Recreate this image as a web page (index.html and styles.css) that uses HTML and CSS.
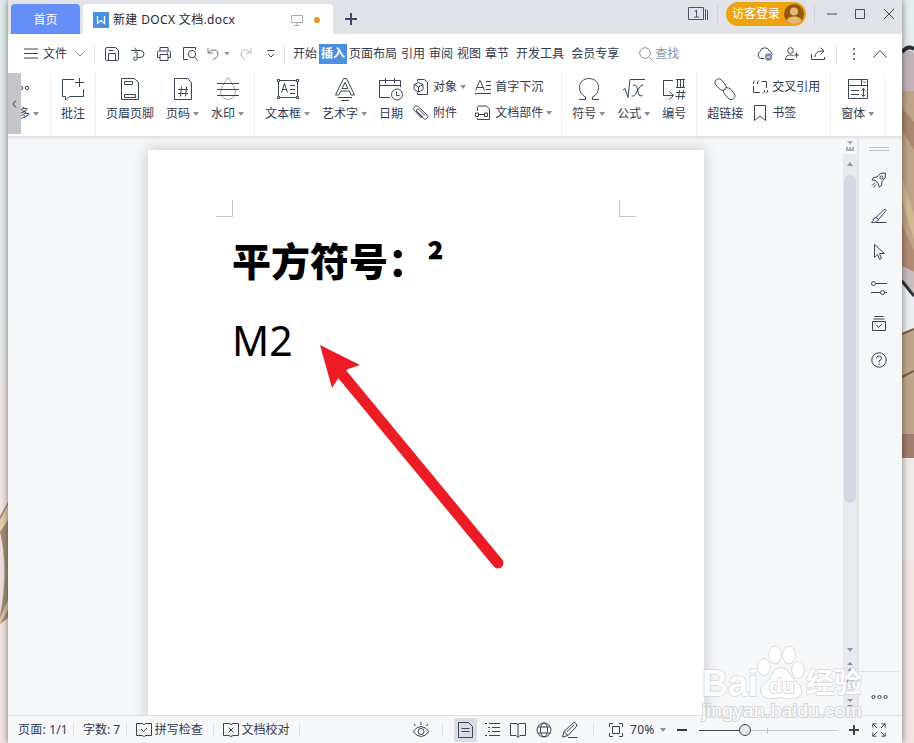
FILE: index.html
```
<!DOCTYPE html>
<html lang="zh-CN">

<head>
    <meta charset="UTF-8">
    <title>新建 DOCX 文档.docx</title>
    <link rel="stylesheet" href="styles.css">
</head>

<body>
    <!-- desktop wallpaper behind the window -->
    <svg class="wallpaper" width="914" height="743" viewBox="0 0 914 743">
        <defs>
            <linearGradient id="wall" x1="0" y1="0" x2="0" y2="1">
                <stop offset="0" stop-color="#e3eeee" />
                <stop offset="0.48" stop-color="#e6e8e8" />
                <stop offset="0.55" stop-color="#f0e5e4" />
                <stop offset="1" stop-color="#f3e4e1" />
            </linearGradient>
        </defs>
        <rect width="914" height="743" fill="url(#wall)" />
        <path d="M0 516L8 502V618L0 624z" fill="#a48d79" />
        <path d="M0 520L8 505V520L0 532z" fill="#e5cfa8" />
        <path d="M0 532Q9 570 0 615z" fill="#eee0dc" />
        <path d="M0 618L8 600V610L0 624z" fill="#dcc6a0" />
        <path d="M902 52Q910 48 914 53V91H902z" fill="#c2b3b8" />
        <path d="M902 52Q908 45 914 49" fill="none" stroke="#2b2d3d" stroke-width="4" />
        <path d="M902 91H914V272L902 266z" fill="#bea489" />
        <path d="M902 108L914 122V150L902 130z" fill="#a88872" />
        <path d="M902 178L914 215V240L902 200z" fill="#d1b993" />
        <path d="M902 225L914 250V272L902 266z" fill="#b18c76" />
        <path d="M902 266L914 272V292L902 282z" fill="#cbbcbe" />
        <path d="M902 282L914 293V329L902 334z" fill="#eceff1" />
        <path d="M902 281L914 296" stroke="#30313a" stroke-width="3" />
        <path d="M902 334L914 329V458H902z" fill="#bda68c" />
        <path d="M902 334L914 329M902 377L914 371" stroke="#7c5c4d" stroke-width="2" />
        <path d="M902 434H914V458H902z" fill="#a07e6d" />
        <path d="M902 458H914V560H902z" fill="#f1edeb" />
    </svg>

    <div class="window">
        <div class="titlebar">
            <div class="home-tab">首页</div>
            <div class="doc-tab">
                <svg width="16" height="16" viewBox="0 0 16 16">
                    <rect width="16" height="16" rx="1" fill="#4a90e2" />
                    <path d="M4.500 4v7.500L8 8.500l3.500 3V4" fill="none" stroke="#fff" stroke-width="1.200" />
                </svg>
                <span class="doc-name">新建 DOCX 文档.docx</span>
                <svg class="screen-icon" width="12" height="12" viewBox="0 0 12 12">
                    <path d="M.5 1.500h11v7H.5zM6 8.500V11M3 11.500h6" stroke="#a9afba" />
                </svg>
                <span class="unsaved"></span>
            </div>
            <svg class="new-tab" width="12" height="12" viewBox="0 0 12 12">
                <path d="M6 0v12M0 6h12" stroke="#3f4a66" stroke-width="2" />
            </svg>
            <div class="window-tools">
                <svg width="21" height="16" viewBox="0 0 21 16">
                    <path d="M.5 1.500h15v12H.5zM17.500 3v11M19.500 4v10M6.500 5.500l2-1.500v7M6 11h5" stroke="#4a5573" />
                </svg>
                <i class="sep"></i>
                <div class="login">访客登录
                    <svg width="20" height="20" viewBox="0 0 20 20">
                        <circle cx="10" cy="10" r="10" fill="#94590c" />
                        <circle cx="10" cy="7.500" r="4" fill="#e6b878" />
                        <path d="M2.500 16.500Q4 12.500 10 12.500T17.500 16.500A10 10 0 0 1 2.500 16.500z" fill="#e6b878" />
                    </svg>
                </div>
                <i class="sep"></i>
                <svg class="win-buttons" width="68" height="12" viewBox="0 0 68 12">
                    <path d="M0 6h10M28.500 1.500h9v9h-9zM57 1l10 10M67 1L57 11" stroke="#3f4a66" />
                </svg>
            </div>
        </div>

        <div class="menubar">
            <svg width="14" height="11" viewBox="0 0 14 11">
                <path d="M0 1h14M0 5.500h14M0 10h14" />
            </svg>
            <span class="file">文件</span>
            <svg class="chev" width="10" height="6" viewBox="0 0 10 6">
                <path d="M.5.5L5 5 9.500.5" stroke="#8d939e" />
            </svg>
            <i class="sep"></i>
            <div class="quick">
                <svg width="14" height="14" viewBox="0 0 14 14">
                    <path d="M2 .5h8.500l3 3V12q0 1.500-1.500 1.500H2Q.5 13.500.5 12V2Q.5.5 2 .5zM3.500 13.500v-7h7v7M3.500 3.500h5" />
                </svg>
                <svg width="14" height="14" viewBox="0 0 14 14">
                    <path d="M0 3.500h9a4 3.500 0 1 1 0 7H6M3 .5l3 3-3 3M4.500 10a1.700 1.700 0 1 0 1.500 1.500V5" />
                </svg>
                <svg width="14" height="14" viewBox="0 0 14 14">
                    <path d="M3 4V.5h8V4M3 10.500H.5V5.500q0-1.500 1.500-1.500h10q1.500 0 1.500 1.500v5H11M3 7.500h8v6H3zM9.500 6h1.500" />
                </svg>
                <svg width="15" height="14" viewBox="0 0 15 14">
                    <path d="M5 12.500H.5V.5h12V3M11.500 10l3 3.500" />
                    <circle cx="9" cy="7" r="3.700" />
                </svg>
            </div>
            <svg class="undo" width="12" height="13" viewBox="0 0 12 13">
                <path d="M1 1v5h5M1 6Q4 2 8 3q4 1.500 3 5-1 3-5 4.500" stroke="#6d7483" />
            </svg>
            <i class="caret"></i>
            <svg class="redo" width="12" height="13" viewBox="0 0 12 13">
                <path d="M11 1v5H6M11 6Q8 2 4 3 0 4.500 1 8q1 3 4 4.500" stroke="#b4b8c0" />
            </svg>
            <svg class="more" width="8" height="9" viewBox="0 0 8 9">
                <path d="M.5 1.500h7M1 5l3 3 3-3" />
            </svg>
            <i class="sep"></i>
            <div class="tabs">
                <span>开始</span>
                <span class="active">插入</span>
                <span>页面布局</span>
                <span>引用</span>
                <span>审阅</span>
                <span>视图</span>
                <span>章节</span>
                <span class="wide">开发工具</span>
                <span class="wide">会员专享</span>
            </div>
            <div class="search">
                <svg width="14" height="14" viewBox="0 0 14 14">
                    <circle cx="6" cy="6" r="5.300" stroke="#8791a3" />
                    <path d="M10 10l3.500 3.500" stroke="#8791a3" />
                </svg>
                查找
            </div>
            <div class="right-tools">
                <svg width="18" height="15" viewBox="0 0 18 15">
                    <path d="M8 12.500H4.500a4 4 0 0 1-.5-7 5 5 0 0 1 9.500-.5q3 1 2.500 4" />
                    <circle cx="12.500" cy="11" r="3.700" fill="#7d89ad" stroke="none" />
                    <path d="M10.500 11h4" stroke="#fff" />
                </svg>
                <svg width="14" height="14" viewBox="0 0 14 14">
                    <circle cx="5.500" cy="3.500" r="2.800" />
                    <path d="M9 12.500H.5q0-4.500 5-4.500 2 0 3 .8M11.500 5.500v5M9 8h5" />
                </svg>
                <svg width="15" height="14" viewBox="0 0 15 14">
                    <path d="M.5 7v5.500h13V10M4 10q0-6 8-6M9.500.5L13 4 9.500 7.500" />
                </svg>
                <i class="sep"></i>
                <svg class="dots" width="2" height="12" viewBox="0 0 2 12">
                    <path d="M0 1h2M0 6h2M0 11h2" stroke="#6d7483" stroke-width="2" />
                </svg>
                <svg width="14" height="8" viewBox="0 0 14 8">
                    <path d="M.5 7.500l6.500-7 6.500 7" />
                </svg>
            </div>
        </div>

        <div class="ribbon">
            <div class="scroll-left">
                <svg width="5" height="8" viewBox="0 0 5 8">
                    <path d="M4 .5L1 4l3 3.500" />
                </svg>
            </div>
            <div class="group clipped">
                <div class="btn">
                    <svg width="28" height="24" viewBox="0 0 28 24">
                        <circle cx="13" cy="11" r="1.600" />
                        <circle cx="19" cy="11" r="1.600" />
                    </svg>
                    <span>更多<i class="caret"></i></span>
                </div>
            </div>
            <div class="group">
                <div class="btn">
                    <svg width="24" height="24" viewBox="0 0 24 24">
                        <path d="M13 2.500H1.500v17h3V23l4-3.500h14V12M18.500 1v9M14 5.500h9" />
                    </svg>
                    <span>批注</span>
                </div>
            </div>
            <div class="group">
                <div class="btn">
                    <svg width="24" height="24" viewBox="0 0 24 24">
                        <path d="M3.500 1.500h13l4 4v17h-17zM6.500 4.500h8v3h-8zM6.500 17.500h11v3h-11z" />
                    </svg>
                    <span>页眉页脚</span>
                </div>
                <div class="btn">
                    <svg width="24" height="24" viewBox="0 0 24 24">
                        <path d="M3.500 1.500h13l4 4v17h-17zM10.500 9.500l-1 10M15.500 9.500l-1 10M7 12.500h10M7 16.500h10" />
                    </svg>
                    <span>页码<i class="caret"></i></span>
                </div>
                <div class="btn">
                    <svg width="24" height="24" viewBox="0 0 24 24">
                        <path d="M12 .5Q5 10 4.500 15a7.500 7.500 0 0 0 15 0Q19 10 12 .5z" stroke="#a3a8b0" />
                        <path d="M1 6.500h22M1 12.500h22M1 18.500h22" />
                    </svg>
                    <span>水印<i class="caret"></i></span>
                </div>
            </div>
            <div class="group insert-text">
                <div class="btn">
                    <svg width="24" height="24" viewBox="0 0 24 24">
                        <path d="M2.500 3.500h19v17h-19zM5.500 15.500l3-9 3 9M6.500 12.500h4M14 8.500h5M14 12.500h5M14 16.500h5" />
                        <path d="M1.500 2.500h2v2h-2zM20.500 2.500h2v2h-2zM1.500 19.500h2v2h-2zM20.500 19.500h2v2h-2z" fill="#fff" />
                    </svg>
                    <span>文本框<i class="caret"></i></span>
                </div>
                <div class="btn">
                    <svg width="24" height="24" viewBox="0 0 24 24">
                        <path d="M2.500 18L10.500 1.500h3L21.500 18h-3.200l-2-4H7.700l-2 4zM9 11.500h6L12 5.500zM5 20.500h14M8 23.500h8" />
                    </svg>
                    <span>艺术字<i class="caret"></i></span>
                </div>
                <div class="btn">
                    <svg width="24" height="24" viewBox="0 0 24 24">
                        <path d="M11 20.500H.5v-17h21V10M.5 8.500h21M6.500 1v5M15.500 1v5M17.500 14.500v4h3" />
                        <circle cx="18" cy="17.500" r="5.500" />
                    </svg>
                    <span>日期</span>
                </div>
                <div class="stack">
                    <div class="row">
                        <svg width="16" height="16" viewBox="0 0 16 16">
                            <path d="M4.500 2.500v-2h7l3 3v12h-10v-2M5.500 3.500l4.500 2v5l-4.500 2.500L1 10.500v-5zM1 5.500L5.500 8 10 5.500M5.500 8v5" />
                        </svg>
                        对象<i class="caret"></i>
                    </div>
                    <div class="row">
                        <svg width="16" height="16" viewBox="0 0 16 16">
                            <path d="M3 6l7.500 7.500c3 2 5.500-1.500 3.500-3.500L5.500 1.700C2.500-.5-1 3 1.500 5.700L8.500 13M12 10.500L6 4.500C4 3.500 2.500 5 4 6.700l6 5.500" />
                        </svg>
                        附件
                    </div>
                </div>
                <div class="stack stack-wide">
                    <div class="row">
                        <svg width="16" height="16" viewBox="0 0 16 16">
                            <path d="M.5 11.500L4.800 1.500h.4L9.500 11.500M2 8.500h6M0 14.500h16M11 2.500h5M11 6.500h5M11 10.500h5" />
                        </svg>
                        首字下沉
                    </div>
                    <div class="row">
                        <svg width="16" height="16" viewBox="0 0 16 16">
                            <path d="M2.500 6V2.500q0-1.500 1.500-1.500h7.500l3 3v10.500h-12V13M.5 8v3.500h3V8zM3.500 9.500h6M9.500 8h3v3.500h-3z" />
                        </svg>
                        文档部件<i class="caret"></i>
                    </div>
                </div>
            </div>
            <div class="group">
                <div class="btn">
                    <svg width="24" height="24" viewBox="0 0 24 24">
                        <path d="M2 22.500h6.500V20Q2.500 17 2.500 10.500C2.500-1.500 21.500-1.500 21.500 10.500q0 6.500-6 9.500v2.500H22" />
                    </svg>
                    <span>符号<i class="caret"></i></span>
                </div>
                <div class="btn">
                    <svg width="24" height="24" viewBox="0 0 24 24">
                        <path d="M1 13l2-1.500L6 20.500l2-18h15M11 8.500q3-2 4 2l1.500 6q1 4 4 2M21 8q-2-.5-4 3l-3.500 6q-1.500 3-4 2" />
                    </svg>
                    <span>公式<i class="caret"></i></span>
                </div>
                <div class="btn">
                    <svg width="24" height="24" viewBox="0 0 24 24">
                        <path d="M11 3.500H1.500v15H11M7.500 14.500l4 4-4 4M14 2.500h9M14 10.500h9M15.500 2.500v8M18.500 2.500v8M21.500 2.500v8M17.500 13l-1 9.500M21.500 13l-1 9.500M14 15.500h9.500M13.500 19.500h9.500" />
                    </svg>
                    <span>编号</span>
                </div>
            </div>
            <div class="group">
                <div class="btn">
                    <svg width="24" height="24" viewBox="0 0 24 24">
                        <path d="M10.500 13.500q-3 0-5-2.500L2.500 7.500C.5 4 4.500.5 8 2.500l4 4.500c1.500 2 1.500 4.500-.5 6M13 10.500q3 0 5 2l3.500 4.500c2 3.500-2.500 7-5.500 5l-4-4.500c-2-2.500-2-4.500 0-6" />
                    </svg>
                    <span>超链接</span>
                </div>
                <div class="stack links">
                    <div class="row">
                        <svg width="16" height="16" viewBox="0 0 16 16">
                            <path d="M1.500 5V3L3 1.500M5.500 5V3L7 1.500M9.500 2.500h5V9M1.500 7v6.500H8M12.500 11v2L11 14.500M15.500 11v2L14 14.500" />
                        </svg>
                        交叉引用
                    </div>
                    <div class="row">
                        <svg width="16" height="16" viewBox="0 0 16 16">
                            <path d="M2.500.5h11v15L8 11l-5.500 4.500z" />
                        </svg>
                        书签
                    </div>
                </div>
            </div>
            <div class="group">
                <div class="btn">
                    <svg width="24" height="24" viewBox="0 0 24 24">
                        <path d="M2.500 2.500h19v19h-19zM2.500 8.500h19M15.500 2.500v6M17 4.500l1.500 1.500L20 4.500M5 13.500h8M5 17.500h8M17.500 11.500v8M15.500 13.500l2-2 2 2M15.500 17.500l2 2 2-2" />
                    </svg>
                    <span>窗体<i class="caret"></i></span>
                </div>
            </div>
        </div>

        <div class="workspace">
            <div class="canvas">
                <div class="page">
                    <div class="crop-marks"><i class="crop-left"></i><i class="crop-right"></i></div>
                    <h1>平方符号：²</h1>
                    <p>M2</p>
                </div>
            </div>
            <div class="scrollbar">
                <svg class="ruler" width="14" height="18" viewBox="0 0 14 18">
                    <path d="M4 5h6L7 9zM3 11h2v2h1v-2h2v2h1v-2h2v4H3z" />
                </svg>
                <div class="track">
                    <i class="arrow up"></i>
                    <div class="thumb"></div>
                    <svg class="scroll-bottom" width="14" height="70" viewBox="0 0 14 70">
                        <path d="M4 3h6L7 7zM4 20l3-3 3 3zM4 26l3-3 3 3zM4 54h6l-3 3zM4 60h6l-3 3z" />
                        <path d="M4.500 35.500h5v7h-5zM6 38.500h2" stroke="#8b95a8" fill="none" />
                    </svg>
                </div>
            </div>
            <div class="sidebar">
                <i class="grip"></i>
                <svg width="16" height="16" viewBox="0 0 16 16">
                    <path d="M14.500 1Q9 .5 6 5L2.500 5.500 1 8l3.500.5L7.500 12l.5 3 2.500-1.500.5-4Q15.500 6 14.500 1zM4 10.500L1 13.500M5 12.500l-2.500 3" />
                    <circle cx="10.500" cy="5.500" r="1.500" />
                </svg>
                <svg width="16" height="16" viewBox="0 0 16 16">
                    <path d="M5 9.500L13 1.500q1.500-1 2 1L7.500 11.500zM5 9.500q-3 0-3 3L.5 14.500q6 .5 7-3M5 14.500h10.500" />
                </svg>
                <svg width="16" height="16" viewBox="0 0 16 16">
                    <path d="M3.500.5v13l3-3 2 5 2-1-2-5h5z" />
                </svg>
                <svg width="16" height="16" viewBox="0 0 16 16">
                    <circle cx="2.500" cy="3.500" r="2" />
                    <circle cx="11.500" cy="12.500" r="2" />
                    <path d="M4.500 3.500H16M0 12.500h9.500M13.500 12.500H16" />
                </svg>
                <svg width="16" height="16" viewBox="0 0 16 16">
                    <path d="M1.500 5.500h13v9h-13zM2.500 3h11M3.500.5h9M5.500 9l2 2.500 3.500-3.500" />
                </svg>
                <svg width="16" height="16" viewBox="0 0 16 16">
                    <circle cx="8" cy="8" r="7.200" />
                    <path d="M5.500 6.500q0-2.500 2.500-2.500t2.500 2.200Q10.500 8 8 9v1.500M8 11.500v1.500" />
                </svg>
                <div class="side-more">
                    <svg width="17" height="6" viewBox="0 0 17 6">
                        <circle cx="2.500" cy="3" r="1.600" />
                        <circle cx="8.500" cy="3" r="1.600" />
                        <circle cx="14.500" cy="3" r="1.600" />
                    </svg>
                </div>
            </div>
        </div>

        <div class="statusbar">
            <span class="pages">页面: 1/1</span>
            <i class="sep"></i>
            <span class="words">字数: 7</span>
            <i class="sep"></i>
            <span class="check">
                <svg width="16" height="14" viewBox="0 0 16 14">
                    <path d="M6 .5H.5v12h5.500l2 1 2-1h5.500V.5H10l-2 1zM5 6l2.500 2.500L11 5" />
                </svg>
                拼写检查
            </span>
            <i class="sep"></i>
            <span class="check">
                <svg width="16" height="14" viewBox="0 0 16 14">
                    <path d="M6 .5H.5v12h5.500l2 1 2-1h5.500V.5H10l-2 1zM5.500 4.500l5 5M10.500 4.500l-5 5" />
                </svg>
                文档校对
            </span>
            <i class="sep"></i>
            <div class="views">
                <svg width="18" height="16" viewBox="0 0 18 16">
                    <path d="M1 9.500Q9-.5 17 9.500 9 19.500 1 9.500zM9 0v3M2 2l1.500 2M16 2l-1.500 2" />
                    <circle cx="9" cy="9.500" r="3" />
                </svg>
                <i class="sep"></i>
                <span class="view-active">
                    <svg width="15" height="16" viewBox="0 0 15 16">
                        <path d="M.5.5h10l4 4v11H.5zM3.500 6.500h8M3.500 9.500h8" />
                    </svg>
                </span>
                <svg class="list" width="15" height="14" viewBox="0 0 15 14">
                    <path d="M0 .5h2M4 .5h11M3 4.500h2M7 4.500h8M3 8.500h2M7 8.500h8M0 12.500h2M4 12.500h11" />
                </svg>
                <svg class="book" width="16" height="15" viewBox="0 0 16 15">
                    <path d="M.5.5H6q2 0 2 1.500 0-1.500 2-1.500h5.500v12H10L8 14.500 6 12.500H.5zM8 2v12" />
                </svg>
                <svg class="globe" width="16" height="16" viewBox="0 0 16 16">
                    <circle cx="8" cy="8" r="7" />
                    <ellipse cx="8" cy="8" rx="3.500" ry="7" />
                    <path d="M2 5h12M2 11h12" />
                </svg>
                <svg class="pen" width="16" height="16" viewBox="0 0 16 16">
                    <path d="M.5 15l1.500-5.500L11 1q1.500-1 3 .5t.5 3L6 13.500zM2 9.500L6 13.500M5 9.500l7-6.500M6 15.500h9.500" />
                </svg>
            </div>
            <i class="sep"></i>
            <div class="zoom">
                <svg width="14" height="14" viewBox="0 0 14 14">
                    <path d="M.5 4V.5H4M10 .5h3.500V4M13.500 10v3.500H10M4 13.500H.5V10M3.500 3.500h7v7h-7z" />
                </svg>
                <span class="percent">70%</span>
                <i class="caret"></i>
                <i class="minus"></i>
                <svg class="slider" width="138" height="14" viewBox="0 0 138 14">
                    <path d="M46 7.500h92M68.500 4.500v6" stroke="#c3c7cd" />
                    <path d="M0 7.500h46" />
                    <circle cx="46" cy="7" r="5.500" fill="#e8e8ea" />
                </svg>
                <svg class="plus" width="10" height="10" viewBox="0 0 10 10">
                    <path d="M5 0v10M0 5h10" stroke-width="2" />
                </svg>
                <svg class="full" width="14" height="14" viewBox="0 0 14 14">
                    <path d="M.8 4.500V.8h3.700M9.500.8h3.700v3.700M13.200 9.500v3.700H9.500M4.500 13.200H.8V9.500M1 1l4 4M13 1L9 5M13 13L9 9M1 13l4-4" />
                </svg>
            </div>
        </div>
    </div>

    <!-- red pointer drawn over the document -->
    <svg class="pointer" width="190" height="230" viewBox="0 0 190 230">
        <path d="M27 29L183 218" stroke="#eb1c24" stroke-width="11" stroke-linecap="round" />
        <path d="M5 0L45 20L33 24L24 32L17 43Z" fill="#eb1c24" />
    </svg>

    <div class="watermark">
        <div class="brand">
            <span class="latin">Bai</span>
            <svg width="50" height="56" viewBox="0 0 50 56">
                <ellipse cx="8" cy="22" rx="6" ry="8" />
                <ellipse cx="19" cy="10" rx="6" ry="8.500" />
                <ellipse cx="33" cy="10" rx="6" ry="8.500" />
                <ellipse cx="42" cy="25" rx="6" ry="8" />
                <path d="M25 23Q31 23 35 32L44 41Q48 52 38 53 32 54 25 52 18 54 12 53 2 51 6 41L15 32Q19 23 25 23z" />
                <text x="13" y="48">du</text>
            </svg>
            <span class="hanzi">经验</span>
        </div>
        <div class="url">jingyan.baidu.com</div>
    </div>
</body>

</html>
```
FILE: styles.css
```
* {
    box-sizing: border-box;
}

body {
    margin: 0;
    height: 743px;
    overflow: hidden;
    position: relative;
    font-family: "Noto Sans", "Noto Sans CJK SC", sans-serif;
    font-size: 12px;
    line-height: 16px;
    color: #2f3a4f;
    white-space: nowrap;
}

svg {
    display: block;
    flex: none;
    fill: none;
    stroke: #3b4558;
}

.wallpaper {
    position: absolute;
    left: 0;
    top: 0;
    stroke: none;
}

.window {
    position: relative;
    display: flex;
    flex-direction: column;
    width: 894px;
    height: 743px;
    margin-left: 8px;
    background: #fff;
    box-shadow: 0 0 7px rgba(0, 0, 0, 0.5);
}

.sep {
    flex: none;
    width: 1px;
    height: 20px;
    background: #dfe1e5;
}

.caret {
    flex: none;
    width: 6px;
    height: 4px;
    background: #8b909b;
    clip-path: polygon(0 0, 100% 0, 50% 100%);
}

/* title bar */
.titlebar {
    display: flex;
    height: 34px;
    padding: 4px 7px 0 3px;
    background: #e1e3e8;
}

.home-tab {
    width: 69px;
    padding-top: 8px;
    text-align: center;
    color: #fff;
    background: #658ff7;
    border-radius: 4px 4px 0 0;
}

.doc-tab {
    display: flex;
    align-items: center;
    width: 250px;
    margin-left: 3px;
    padding: 1px 0 0 10px;
    background: #fff;
    border-radius: 4px 4px 0 0;
}

.doc-tab svg {
    stroke: none;
}

.doc-name {
    width: 178px;
    margin-left: 4px;
    color: #1f2736;
    letter-spacing: 0.35px;
}

.unsaved {
    width: 6px;
    height: 6px;
    margin-left: 11px;
    border-radius: 50%;
    background: #dd9a1c;
}

.new-tab {
    margin: 9px 0 0 12px;
}

.window-tools {
    display: flex;
    align-items: center;
    height: 20px;
    margin-left: auto;
}

.window-tools .sep {
    background: #cfd2d8;
    margin-left: 8px;
}

.login {
    display: flex;
    align-items: center;
    justify-content: space-between;
    width: 80px;
    height: 24px;
    margin-left: 8px;
    padding: 0 2px 0 6px;
    border-radius: 12px;
    background: #eea410;
    color: #fff;
}

.login svg {
    stroke: none;
}

.win-buttons {
    margin-left: 12px;
}

/* menu bar */
.menubar {
    display: flex;
    align-items: center;
    height: 39px;
    padding: 0 15px 0 16px;
}

.file {
    margin-left: 5px;
}

.chev {
    margin-left: 8px;
}

.menubar > .sep {
    margin-left: 9px;
}

.quick {
    display: flex;
    gap: 12px;
    margin-left: 10px;
}

.undo {
    margin-left: 9px;
}

.menubar .caret {
    margin-left: 5px;
}

.redo {
    margin-left: 10px;
}

.more {
    margin-left: 15px;
}

.tabs {
    display: flex;
    align-items: center;
    gap: 4px;
    margin-left: 8px;
}

.tabs .active {
    width: 28px;
    height: 20px;
    margin: 0 -2px;
    padding: 2px;
    background: #4a90e2;
    color: #fff;
    font-weight: bold;
}

.tabs .wide {
    margin-left: 3px;
}

.search {
    display: flex;
    align-items: center;
    gap: 2px;
    margin-left: 20px;
    color: #8791a3;
}

.right-tools {
    display: flex;
    align-items: center;
    gap: 12px;
    margin-left: auto;
}

.right-tools svg:first-child {
    margin-right: -1px;
    margin-left: 1px;
}

.right-tools .sep {
    margin-left: -2px;
}

.dots {
    margin: 0 6px 0 4px;
}

/* ribbon */
.ribbon {
    display: flex;
    height: 63px;
}

.scroll-left {
    display: flex;
    align-items: center;
    justify-content: center;
    width: 13px;
    height: 61px;
    background: #c4c6cc;
}

.group {
    display: flex;
    gap: 12px;
    padding: 4px 10px 0;
    border-right: 1px solid #eceef0;
}

.btn {
    display: flex;
    flex-direction: column;
    align-items: center;
    gap: 5px;
}

.btn span {
    display: flex;
    align-items: center;
}

.btn .caret {
    margin-left: 3px;
}

.clipped {
    width: 30px;
    overflow: hidden;
    padding: 4px 11px 0 0;
    justify-content: flex-end;
}

.insert-text {
    padding-right: 9px;
}

.stack {
    display: flex;
    flex-direction: column;
    gap: 10px;
    margin-left: -2px;
    padding-top: 2px;
}

.stack-wide,
.links {
    margin-left: -3px;
}

.row {
    display: flex;
    align-items: center;
    gap: 4px;
    height: 16px;
}

.row .caret {
    margin-left: -1px;
}

/* document area */
.workspace {
    display: flex;
    flex: 1;
    min-height: 0;
    background: #f5f7f9;
    box-shadow: inset 0 3px 3px -1px #dfe2e5;
}

.canvas {
    width: 835px;
    padding: 14px 0 0 140px;
    overflow: hidden;
}

.page {
    width: 556px;
    height: 600px;
    padding: 50px 68px 0;
    background: #fff;
    box-shadow: 0 0 14px rgba(60, 65, 70, 0.28);
}

.crop-marks {
    display: flex;
    justify-content: space-between;
}

.crop-marks i {
    width: 17px;
    height: 17px;
    border-bottom: 1px solid #c4c4c4;
}

.crop-marks .crop-left {
    border-right: 1px solid #c4c4c4;
}

.crop-marks .crop-right {
    border-left: 1px solid #c4c4c4;
}

.page h1 {
    margin: 12px 0 0 16px;
    font-family: "Noto Sans CJK SC", sans-serif;
    font-size: 39px;
    font-weight: 900;
    line-height: 60px;
    color: #000;
}

.page p {
    margin: 21px 0 0 16px;
    font-size: 41px;
    line-height: 60px;
    color: #000;
}

.scrollbar {
    width: 14px;
}

.ruler {
    fill: #a9afba;
    stroke: none;
}

.track {
    display: flex;
    flex-direction: column;
    align-items: center;
    height: 561px;
    background: #e8eaf0;
}

.arrow {
    width: 6px;
    height: 4px;
    margin-top: 8px;
    background: #8b95a8;
    clip-path: polygon(50% 0, 100% 100%, 0 100%);
}

.thumb {
    width: 12px;
    height: 328px;
    margin-top: 9px;
    border-radius: 6px;
    background: #d5d8e0;
}

.scroll-bottom {
    margin-top: auto;
    fill: #8b95a8;
    stroke: none;
}

.sidebar {
    display: flex;
    flex-direction: column;
    align-items: center;
    gap: 20px;
    width: 45px;
    border-left: 2px solid #e5e7ec;
    padding: 11px 3px 0 0;
}

.grip {
    width: 20px;
    height: 4px;
    margin-bottom: 1px;
    border: solid #b9bdc5;
    border-width: 1px 0;
}

.side-more {
    display: flex;
    align-items: center;
    justify-content: center;
    width: 100%;
    height: 44px;
    margin-top: auto;
    padding-top: 6px;
    border-top: 1px solid #dfe2e6;
}

/* status bar */
.statusbar {
    display: flex;
    align-items: center;
    height: 28px;
    padding: 1px 16px 0 10px;
    border-top: 1px solid #dcdfe3;
    background: #f5f7f9;
}

.statusbar .sep {
    height: 14px;
}

.pages {
    width: 55px;
    letter-spacing: 0.2px;
}

.words {
    width: 52px;
    padding-left: 9px;
}

.check {
    display: flex;
    align-items: center;
    gap: 3px;
    width: 86px;
    padding-left: 9px;
}

.views {
    display: flex;
    align-items: center;
    width: 293px;
    padding-left: 112px;
}

.views .sep {
    margin-left: 12px;
}

.view-active {
    display: flex;
    align-items: center;
    justify-content: center;
    width: 23px;
    height: 24px;
    margin-left: 11px;
    background: #d8dce4;
    border-radius: 2px;
}

.list {
    margin-left: 8px;
}

.book,
.globe,
.pen {
    margin-left: 10px;
}

.zoom {
    display: flex;
    align-items: center;
    padding-left: 15px;
}

.percent {
    width: 25px;
    margin-left: 7px;
    letter-spacing: 0.3px;
}

.zoom .caret {
    margin-left: 5px;
}

.minus {
    width: 10px;
    height: 2px;
    margin-left: 11px;
    background: #2f3a4f;
}

.slider {
    margin-left: 12px;
}

.plus {
    margin-left: 12px;
}

.full {
    margin-left: 13px;
}

.pointer {
    position: absolute;
    left: 315px;
    top: 345px;
    stroke: none;
}

/* watermark */
.watermark {
    position: absolute;
    left: 702px;
    top: 645px;
    color: #fff;
    font-family: "Liberation Sans", "Noto Sans CJK SC", sans-serif;
    -webkit-text-stroke: 1.3px #d0d2d6;
    paint-order: stroke fill;
    opacity: 0.9;
}

.brand {
    display: flex;
    align-items: flex-end;
}

.brand svg {
    fill: #fff;
    stroke: #d0d2d6;
    stroke-width: 1.5;
}

.brand text {
    font-size: 21px;
    font-weight: bold;
}

.latin {
    width: 54px;
    font-size: 36px;
    font-weight: bold;
    line-height: 34px;
}

.hanzi {
    font-size: 28px;
    font-weight: bold;
    line-height: 34px;
}

.url {
    margin-top: -2px;
    font-size: 19px;
    line-height: 24px;
    letter-spacing: 0.4px;
    -webkit-text-stroke-width: 2px;
}
```
